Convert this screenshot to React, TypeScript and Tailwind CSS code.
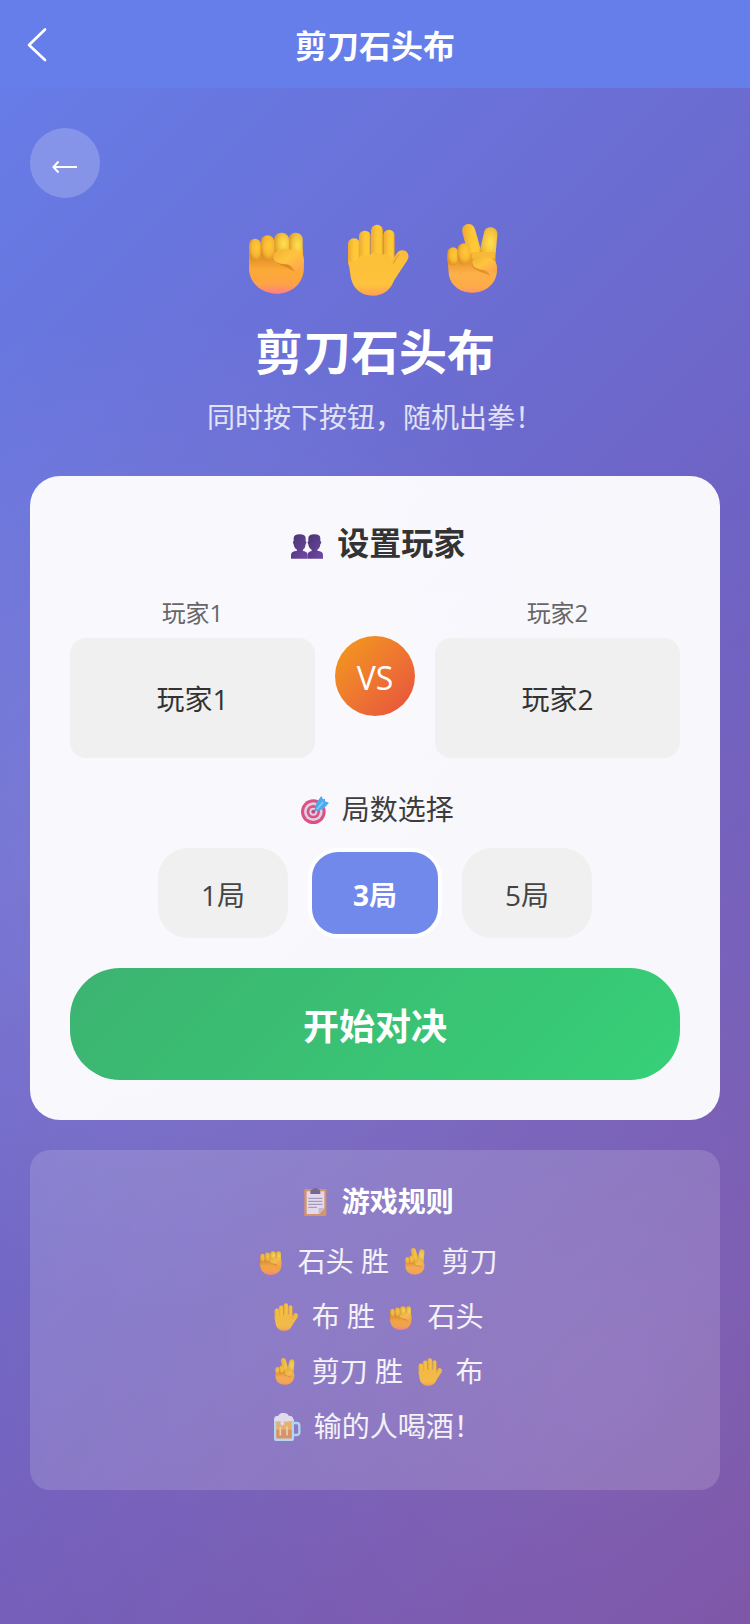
import React, { useState } from "react";

type IconProps = { className?: string }

// Gradients shared by every hand drawing on the page
function HandDefs() {
    return (
        <svg width="0" height="0" className="absolute" aria-hidden="true">
            <defs>
                <linearGradient id="fistPalm" x1="0" y1="0" x2="0" y2="1">
                    <stop offset="0" stopColor="#e8982a"/>
                    <stop offset="0.25" stopColor="#e6922c"/>
                    <stop offset="0.5" stopColor="#fbaa37"/>
                    <stop offset="0.8" stopColor="#fda344"/>
                    <stop offset="1" stopColor="#ff7d8c"/>
                </linearGradient>
                <linearGradient id="palm" x1="0" y1="0" x2="0" y2="1">
                    <stop offset="0" stopColor="#fdbf38"/>
                    <stop offset="0.75" stopColor="#fec23c"/>
                    <stop offset="1" stopColor="#ff9f55"/>
                </linearGradient>
                <linearGradient id="peacePalm" x1="0" y1="0" x2="0" y2="1">
                    <stop offset="0" stopColor="#e8962c"/>
                    <stop offset="0.25" stopColor="#ea9a30"/>
                    <stop offset="0.5" stopColor="#fdb047"/>
                    <stop offset="0.85" stopColor="#fdab4a"/>
                    <stop offset="1" stopColor="#ff965f"/>
                </linearGradient>
                <radialGradient id="finger" cx="0.6" cy="0.4" r="0.62">
                    <stop offset="0" stopColor="#ffcb38"/>
                    <stop offset="0.6" stopColor="#f8b733"/>
                    <stop offset="1" stopColor="#dd9026"/>
                </radialGradient>
                <radialGradient id="fingerLight" cx="0.65" cy="0.45" r="0.62">
                    <stop offset="0" stopColor="#ffe052"/>
                    <stop offset="0.6" stopColor="#f3c23c"/>
                    <stop offset="1" stopColor="#d99f2b"/>
                </radialGradient>
                <linearGradient id="longFinger" x1="0" y1="0" x2="1" y2="0">
                    <stop offset="0" stopColor="#eda832"/>
                    <stop offset="0.5" stopColor="#ffc837"/>
                    <stop offset="0.85" stopColor="#ffc837"/>
                    <stop offset="1" stopColor="#e09a28"/>
                </linearGradient>
                <linearGradient id="thumb" x1="0" y1="0" x2="1" y2="1">
                    <stop offset="0" stopColor="#efb22f"/>
                    <stop offset="0.45" stopColor="#ffc440"/>
                    <stop offset="1" stopColor="#fca04e"/>
                </linearGradient>
            </defs>
        </svg>
    )
}

function Fist({ className }: IconProps) {
    return (
        <svg viewBox="0 0 216 216" className={className} aria-hidden="true">
            <path d="M24 84 C24 70 184 60 186 76 L189 128 C189 178 152 209 107 209 C60 209 24 176 24 132 Z" fill="url(#fistPalm)"/>
            <rect x="143" y="26" width="42" height="84" rx="20" fill="url(#fingerLight)"/>
            <rect x="99" y="26" width="45" height="72" rx="21" fill="url(#fingerLight)"/>
            <rect x="24" y="44" width="36" height="66" rx="18" fill="url(#finger)"/>
            <rect x="59" y="34" width="41" height="76" rx="20" fill="url(#finger)"/>
            <path d="M98 104 C108 126 138 124 160 144 C150 118 120 112 102 92 Z" fill="#cf7d22" opacity="0.7"/>
            <path d="M97 99 C97 84 112 76 132 76 H152 C176 76 189 90 189 112 C189 130 182 143 170 141 C158 139 160 124 136 121 C114 120 97 114 97 99 Z" fill="url(#thumb)"/>
        </svg>
    )
}

function Palm({ className }: IconProps) {
    return (
        <svg viewBox="0 0 216 216" className={className} aria-hidden="true">
            <rect x="27" y="43" width="36" height="90" rx="17" fill="url(#longFinger)"/>
            <rect x="60" y="20" width="35" height="96" rx="17" fill="url(#longFinger)"/>
            <rect x="96" y="2" width="36" height="110" rx="18" fill="url(#longFinger)"/>
            <rect x="133" y="17" width="34" height="104" rx="17" fill="url(#longFinger)"/>
            <path d="M190 97 L140 168" stroke="#fdbc3c" strokeWidth="37" strokeLinecap="round"/>
            <path d="M28 108 C36 118 50 112 63 98 C70 88 86 100 96 90 C106 80 122 92 132 92 C142 84 160 96 163 118 C170 108 178 98 186 92 L205 108 L166 168 C154 198 134 215 102 215 C62 215 38 188 34 152 Z" fill="url(#palm)"/>
            <path d="M163 119 Q167 106 180 92" stroke="#dc962f" strokeWidth="4" fill="none" opacity="0.7"/>
        </svg>
    )
}

function Peace({ className }: IconProps) {
    return (
        <svg viewBox="0 0 216 216" className={className} aria-hidden="true">
            <path d="M76 24 C72 -4 108 -8 114 16 L130 72 L134 110 L98 110 Z" fill="url(#longFinger)"/>
            <path d="M141 26 C145 2 184 6 181 32 L174 112 L122 108 L130 72 Z" fill="url(#fingerLight)"/>
            <path d="M31 96 C60 88 130 84 174 96 L180 138 C180 178 146 206 108 206 C66 206 37 180 35 146 Z" fill="url(#peacePalm)"/>
            <path d="M104 84 H174 V104 H104 Z" fill="#f7ba38"/>
            <rect x="31" y="70" width="34" height="54" rx="17" fill="url(#finger)"/>
            <rect x="61" y="58" width="40" height="64" rx="20" fill="url(#finger)"/>
            <path d="M104 122 C114 144 138 142 160 156 C148 134 122 134 108 112 Z" fill="#cf7d22" opacity="0.6"/>
            <path d="M106 116 C106 104 118 98 132 98 L154 100 C172 104 181 120 180 134 C178 148 166 146 156 141 C140 138 106 136 106 116 Z" fill="url(#thumb)"/>
        </svg>
    )
}

function People({ className }: IconProps) {
    return (
        <svg viewBox="0 0 96 96" className={className} aria-hidden="true">
            <defs>
                <linearGradient id="person" x1="0" y1="0" x2="1" y2="1">
                    <stop offset="0" stopColor="#4c3274"/>
                    <stop offset="1" stopColor="#6f4aa6"/>
                </linearGradient>
            </defs>
            <path d="M8 22 Q8 10 26 10 Q44 10 44 22 V30 Q49 34 44 40 Q43 52 36 56 V60 Q50 62 50 72 V83 H0 V72 Q0 60 18 59 V56 Q9 52 8 40 Q3 34 8 30 Z" fill="url(#person)"/>
            <path d="M52 22 Q52 10 70 10 Q88 10 88 22 V30 Q94 34 88 40 Q87 52 79 56 V59 Q96 60 96 72 V83 H50 V72 Q50 62 62 60 V56 Q53 52 52 40 Q47 34 52 30 Z" fill="url(#person)"/>
        </svg>
    )
}

function Target({ className }: IconProps) {
    return (
        <svg viewBox="0 0 84 84" className={className} aria-hidden="true">
            <circle cx="37" cy="47" r="37" fill="#e0457b"/>
            <circle cx="37" cy="47" r="28" fill="#d9cfe4"/>
            <circle cx="37" cy="47" r="20" fill="#e0457b"/>
            <circle cx="37" cy="47" r="12" fill="#d9cfe4"/>
            <circle cx="37" cy="47" r="6" fill="#c5406f"/>
            <path d="M37 47 L58 28" stroke="#6b6f8c" strokeWidth="4"/>
            <path d="M42 38 L46 20 L61 0 L66 10 L72 8 L72 16 L84 20 L68 38 L48 46 Z" fill="#45a6ea"/>
            <path d="M48 40 L66 18" stroke="#7fcbf5" strokeWidth="5"/>
        </svg>
    )
}

function Clipboard({ className }: IconProps) {
    return (
        <svg viewBox="0 0 84 84" className={className} aria-hidden="true">
            <rect x="10" y="3" width="66" height="81" rx="4" fill="#e0975f"/>
            <path d="M17 10 H70 V62 L54 78 H17 Z" fill="#ebe3f1"/>
            <path d="M70 60 H53 V78 Z" fill="#cbbcdc"/>
            <path d="M28 10 Q28 4 36 4 Q37 0 43 0 Q49 0 50 4 Q58 4 58 10 V18 H28 Z" fill="#73678a"/>
            <path d="M22 31 H64 M22 40 H64 M22 49 H64 M22 58 H48" stroke="#9c90ad" strokeWidth="3"/>
        </svg>
    )
}

function Beer({ className }: IconProps) {
    return (
        <svg viewBox="0 0 84 84" className={className} aria-hidden="true">
            <path d="M58 30 H72 Q79 30 79 38 V58 Q79 66 72 66 H58" fill="none" stroke="#b3def4" strokeWidth="7"/>
            <path d="M3 18 H63 V78 Q63 84 57 84 H9 Q3 84 3 78 Z" fill="#b9e2f6"/>
            <path d="M10 20 H56 V76 H10 Z" fill="#f3b65f"/>
            <path d="M10 50 H56 V76 H10 Z" fill="#e0965f"/>
            <path d="M22 44 V66 M42 42 V66" stroke="#f7d9ae" strokeWidth="5" strokeLinecap="round"/>
            <path d="M4 22 Q1 8 16 8 Q20 -2 33 0 Q44 0 47 8 Q62 8 60 20 Q56 26 48 24 Q42 28 34 24 V34 Q28 42 22 34 V24 Q12 28 4 22 Z" fill="#ebe6f2"/>
            <path d="M22 24 V34 Q28 42 34 34 V24" stroke="#c9bedc" strokeWidth="2" fill="none"/>
        </svg>
    )
}

const small = "mx-[5px] inline-block size-7 shrink-0 align-[-4px] opacity-90"

const rules = [
    { key: "rock", body: <><Fist className={small}/> 石头 胜 <Peace className={small}/> 剪刀</> },
    { key: "paper", body: <><Palm className={small}/> 布 胜 <Fist className={small}/> 石头</> },
    { key: "scissors", body: <><Peace className={small}/> 剪刀 胜 <Palm className={small}/> 布</> },
    { key: "drink", body: <><Beer className={small}/> 输的人喝酒！</> },
]

type PlayerFieldProps = { id: string; label: string; value: string; onChange: (value: string) => void }

function PlayerField({ id, label, value, onChange }: PlayerFieldProps) {
    return (
        <div className="flex min-w-0 flex-1 flex-col gap-2 pt-0.5">
            <label htmlFor={id} className="text-center text-2xl leading-[34px] text-[#666]">{label}</label>
            <input
                id={id}
                value={value}
                onChange={(e) => onChange(e.target.value)}
                className="h-[120px] w-full rounded-2xl bg-[#f0f0f0] text-center text-[28px] text-[#333] outline-none"
            />
        </div>
    )
}

function App() {
    const [players, setPlayers] = useState(["玩家1", "玩家2"])
    const [rounds, setRounds] = useState(3)

    return (
        <div className="flex min-h-screen flex-col bg-[radial-gradient(circle_at_20%_50%,rgba(255,255,255,0.1)_0%,transparent_50%),radial-gradient(circle_at_80%_85%,rgba(255,255,255,0.09)_0%,transparent_60%),linear-gradient(135deg,#667eea_0%,#764ba2_100%)] font-['Open_Sans','Noto_Sans_CJK_SC',sans-serif] text-white">
            <HandDefs/>
            <header className="grid h-[88px] grid-cols-[80px_1fr_80px] items-center bg-[#667eea]">
                <button type="button" aria-label="返回" className="flex h-full items-center pl-6">
                    <svg viewBox="0 0 24 36" className="h-9 w-6" fill="none" stroke="currentColor" strokeWidth="2.7" strokeLinecap="round" strokeLinejoin="round" aria-hidden="true">
                        <path d="M21 3.500 L5 19 L21 34"/>
                    </svg>
                </button>
                <h1 className="pt-1 text-center text-[32px] font-bold leading-10">剪刀石头布</h1>
            </header>

            <main className="flex flex-col px-[30px] pt-10 pb-10">
                <button type="button" aria-label="返回上一页" className="flex size-[70px] items-center justify-center rounded-full bg-white/20">
                    <svg viewBox="0 0 26 26" className="mt-2 size-[26px]" fill="none" stroke="currentColor" strokeWidth="2" aria-hidden="true">
                        <path d="M25 13 H1.500 M6.500 7.500 L1.500 13 L6.500 18.500"/>
                    </svg>
                </button>

                <section className="flex flex-col items-center pt-[26px] pb-[39px]">
                    <div className="flex gap-[26px]">
                        <Fist className="size-[72px]"/>
                        <Palm className="size-[72px]"/>
                        <Peace className="size-[72px]"/>
                    </div>
                    <h2 className="mt-[22px] text-5xl font-bold leading-[68px]">剪刀石头布</h2>
                    <p className="mt-[11px] text-[28px] leading-10 text-white/80">同时按下按钮，随机出拳！</p>
                </section>

                <section className="rounded-[30px] bg-white/95 p-10 text-[#333]">
                    <h3 className="mb-7 pt-1 text-center text-[32px] font-bold leading-[46px]">
                        <People className="mx-1.5 inline-block size-8 align-[-8px]"/> 设置玩家
                    </h3>
                    <div className="flex items-center gap-5">
                        <PlayerField id="player1" label="玩家1" value={players[0]} onChange={(v) => setPlayers([v, players[1]])}/>
                        <div className="flex size-20 shrink-0 items-center justify-center rounded-full bg-linear-135 from-[#f39c12] to-[#e74c3c] pt-1 text-[32px] text-white">VS</div>
                        <PlayerField id="player2" label="玩家2" value={players[1]} onChange={(v) => setPlayers([players[0], v])}/>
                    </div>

                    <p className="mt-[31px] mb-[19px] text-center text-[28px] leading-10 opacity-95">
                        <Target className="mx-[5px] inline-block size-7 align-[-4px]"/> 局数选择
                    </p>
                    <div className="flex justify-center gap-5">
                        {[1, 3, 5].map((n) => (
                            <button
                                key={n}
                                type="button"
                                aria-pressed={rounds === n}
                                onClick={() => setRounds(n)}
                                className={rounds === n
                                    ? "h-[90px] w-[134px] rounded-[30px] border-4 border-white bg-[#7189ea] pt-1 text-[28px] font-bold text-white"
                                    : "h-[90px] w-[130px] rounded-[30px] bg-[#f0f0f0] pt-1 text-[28px] text-[#444]"}
                            >
                                {n}局
                            </button>
                        ))}
                    </div>

                    <button type="button" className="mt-[30px] h-28 w-full rounded-[50px] bg-linear-135 from-[#3cb371] to-[#36d077] pt-1.5 text-4xl font-bold text-white">
                        开始对决
                    </button>
                </section>

                <section className="mt-[30px] rounded-[20px] bg-white/15 px-[30px] pt-[31px] pb-[29px] text-center text-[28px] leading-10">
                    <h3 className="mb-5 font-bold"><Clipboard className={small}/> 游戏规则</h3>
                    <ul>
                        {rules.map((rule) => (
                            <li key={rule.key} className="mb-[15px] text-white/90">{rule.body}</li>
                        ))}
                    </ul>
                </section>
            </main>
        </div>
    );
}

export default App
